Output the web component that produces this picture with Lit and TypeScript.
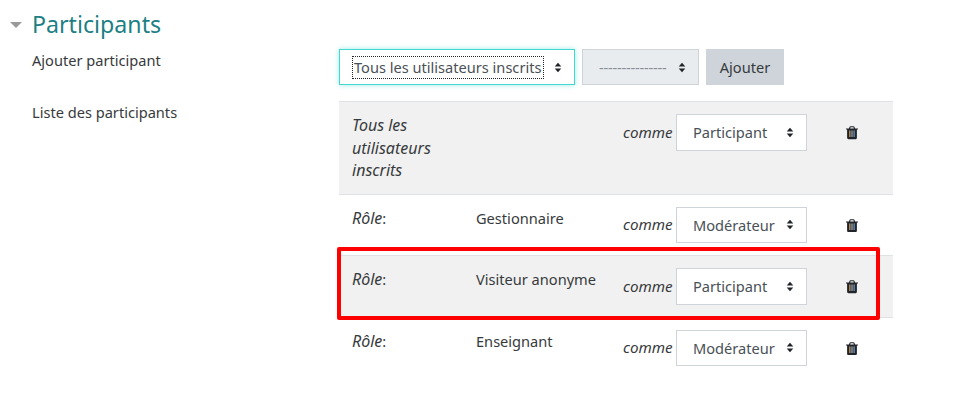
import { LitElement, html, css, svg } from "lit";
import { customElement } from "lit/decorators.js";

interface Participant {
  kind: string;
  name?: string;
  role: string;
}

const participants: Participant[] = [
  { kind: "Tous les utilisateurs inscrits", role: "Participant" },
  { kind: "Rôle", name: "Gestionnaire", role: "Modérateur" },
  { kind: "Rôle", name: "Visiteur anonyme", role: "Participant" },
  { kind: "Rôle", name: "Enseignant", role: "Modérateur" },
];

const arrows = html`<svg class="arrows" viewBox="0 0 10 14" aria-hidden="true">
  <path d="M5 1 9.2 5.6H.8zM5 13 .8 8.4h8.4z" />
</svg>`;

// the slots of the bin look tinted in the reference, hence the rects behind the glyph
const trash = html`<svg class="trash" viewBox="192 128 1408 1536" aria-hidden="true">
  ${svg`<rect x="560" y="640" width="160" height="780" fill="#d2933f" />
    <rect x="816" y="640" width="160" height="780" fill="#8f9aa0" />
    <rect x="1072" y="640" width="160" height="780" fill="#4b8fd0" />`}
  <path
    d="M704 1376v-704q0-14-9-23t-23-9h-64q-14 0-23 9t-9 23v704q0 14 9 23t23 9h64q14 0 23-9t9-23zm256 0v-704q0-14-9-23t-23-9h-64q-14 0-23 9t-9 23v704q0 14 9 23t23 9h64q14 0 23-9t9-23zm256 0v-704q0-14-9-23t-23-9h-64q-14 0-23 9t-9 23v704q0 14 9 23t23 9h64q14 0 23-9t9-23zm-544-992h448l-48-117q-7-9-17-11h-317q-10 2-17 11zm928 32v64q0 14-9 23t-23 9h-96v948q0 83-47 143.500t-113 60.500h-832q-66 0-113-58.500t-47-141.500v-952h-96q-14 0-23-9t-9-23v-64q0-14 9-23t23-9h309l70-167q15-37 54-63t79-26h320q40 0 79 26t54 63l70 167h309q14 0 23 9t9 23z"
  />
</svg>`;

@customElement("app-root")
export class AppRoot extends LitElement {
  static styles = css`
    :host {
      display: block;
      position: relative;
      height: 408px;
      overflow: hidden;
      background: #fff;
      color: #373a3c;
      font-family: "Noto Sans", sans-serif;
      font-size: 14.6px;
      line-height: 22.5px;
    }
    .section {
      padding: 11px 84px 0 10px;
    }
    .heading {
      display: flex;
      align-items: center;
      gap: 10px;
      height: 27px;
      margin-bottom: 11px;
    }
    .caret {
      width: 0;
      height: 0;
      border-left: 6px solid transparent;
      border-right: 6px solid transparent;
      border-top: 6px solid #999;
    }
    h3 {
      margin: 0;
      font-size: 23.2px;
      font-weight: 400;
      color: #1d7f85;
    }
    .form-row {
      display: grid;
      grid-template-columns: 329px 1fr;
      margin-bottom: 16px;
    }
    .label {
      padding-left: 22px;
    }
    .controls {
      display: flex;
      gap: 7px;
    }
    .select {
      box-sizing: border-box;
      display: flex;
      align-items: center;
      justify-content: space-between;
      height: 36.5px;
      padding: 0 12px 0 16px;
      background: #fff;
      border: 1px solid #ced4da;
      color: #495057;
    }
    .arrows {
      flex: none;
      width: 8px;
      height: 11px;
      fill: #212529;
    }
    .select.focus {
      width: 236px;
      height: 36px;
      padding-left: 13px;
      border-color: #40d8d0;
      box-shadow: 0 0 5px rgba(64, 216, 208, 0.5);
    }
    .select.focus span {
      outline: 1px dotted #212529;
      padding: 0 2px 0 1px;
      line-height: 21px;
    }
    .select.off {
      width: 117px;
      height: 36px;
      background: #e9ecef;
      color: #868e96;
    }
    .select.off span {
      letter-spacing: -0.2px;
    }
    .button {
      width: 78px;
      height: 36px;
      background: #ced4da;
      color: #373a3c;
      display: grid;
      place-items: center;
    }
    .table {
      width: 554px;
    }
    .row {
      display: grid;
      grid-template-columns: 124px 147px 53px 131px 1fr;
      padding: 12px 0 12px 13px;
      border-top: 1px solid #dee2e6;
    }
    .row.odd {
      background: #f1f1f1;
    }
    .kind {
      font-style: italic;
      font-size: 16px;
    }
    .row.all .kind {
      grid-column: 1 / span 2;
      width: 100px;
    }
    .comme {
      font-style: italic;
      font-size: 15.2px;
      padding-top: 6.5px;
    }
    .row .select {
      width: 131px;
    }
    .trash {
      display: block;
      width: 12px;
      height: 13.5px;
      margin: 12px 0 0 39px;
      fill: #212529;
    }
    .highlight {
      position: absolute;
      left: 337px;
      top: 247px;
      width: 543px;
      height: 73px;
      box-sizing: border-box;
      border: 4px solid #f00;
      border-radius: 2px;
    }
  `;

  private renderRow(p: Participant, i: number) {
    return html`
      <div class="row ${i % 2 === 0 ? "odd" : ""} ${p.name ? "" : "all"}">
        ${p.name
          ? html`<div><span class="kind">${p.kind}</span>:</div>
              <div>${p.name}</div>`
          : html`<div class="kind">${p.kind}</div>`}
        <div class="comme">comme</div>
        <div class="select"><span>${p.role}</span>${arrows}</div>
        ${trash}
      </div>
    `;
  }

  render() {
    return html`
      <div class="section">
        <div class="heading">
          <div class="caret"></div>
          <h3>Participants</h3>
        </div>
        <div class="form-row">
          <div class="label">Ajouter participant</div>
          <div class="controls">
            <div class="select focus"><span>Tous les utilisateurs inscrits</span>${arrows}</div>
            <div class="select off"><span>---------------</span>${arrows}</div>
            <div class="button">Ajouter</div>
          </div>
        </div>
        <div class="form-row">
          <div class="label">Liste des participants</div>
          <div class="table">${participants.map((p, i) => this.renderRow(p, i))}</div>
        </div>
      </div>
      <div class="highlight"></div>
    `;
  }
}
